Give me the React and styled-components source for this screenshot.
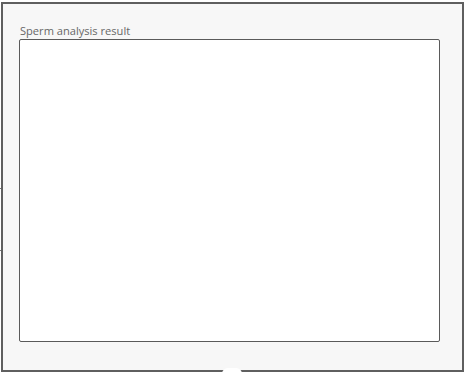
import React from "react";
import styled, { createGlobalStyle } from "styled-components";

const GlobalStyle = createGlobalStyle`
	html, body {
		margin: 0;
		padding: 0;
		background: #ffffff;
	}
	body {
		font-family: "Open Sans", "Noto Sans", sans-serif;
	}
`;

const App = () => {
	return (
		<Page>
			<GlobalStyle />
			<Tick top={188} />
			<Tick top={250} />
			<Frame>
				<Label htmlFor="result">Sperm analysis result</Label>
				<ResultBox id="result" />
				<Notch />
			</Frame>
		</Page>
	);
};

const Page = styled.div`
	position: relative;
	width: 464px;
	height: 372px;
	overflow: hidden;
	padding: 2px 0 0 1px;
	box-sizing: border-box;
`;

const Tick = styled.span`
	position: absolute;
	left: 0;
	top: ${(p) => p.top}px;
	width: 2px;
	height: 1px;
	background: #777777;
`;

const Frame = styled.div`
	position: relative;
	width: 463px;
	height: 370px;
	box-sizing: border-box;
	border: 2px solid #5f5f5f;
	background: #f7f7f7;
	padding: 18px 22px 28px 16px;
	display: flex;
	flex-direction: column;
`;

const Label = styled.label`
	font-size: 11.1px;
	line-height: 17px;
	color: #676767;
	padding-left: 1px;
`;

const ResultBox = styled.div`
	flex: 1;
	background: #ffffff;
	border: 1px solid #5a5a5a;
	border-radius: 2px;
`;

const Notch = styled.span`
	position: absolute;
	left: 219px;
	bottom: -4px;
	width: 20px;
	height: 6px;
	border-radius: 6px 6px 0 0;
	background: #ffffff;
`;

export default App;
